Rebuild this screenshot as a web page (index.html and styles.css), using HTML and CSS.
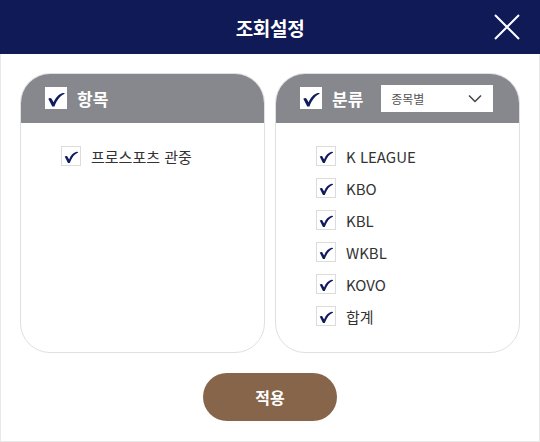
FILE: index.html
```html
<!DOCTYPE html>
<html lang="ko">
<head>
<meta charset="utf-8">
<link rel="stylesheet" href="styles.css">
</head>
<body>
<div class="modal">
  <header class="modal-head">
    <h1 class="title">조회설정</h1>
    <button class="close" aria-label="닫기">
      <svg width="26" height="26" viewBox="0 0 26 26"><path d="M1 1L25 25M25 1L1 25" stroke="#fff" stroke-width="2" fill="none"/></svg>
    </button>
  </header>
  <div class="modal-body">
    <div class="panels">
      <section class="panel">
        <div class="panel-head">
          <span class="cb cb-lg"><svg viewBox="0 0 20 20"><path d="M3 10.6 C4 9.8 5.2 9.6 5.8 10.4 L7.9 13.8 C9.6 9.4 12.6 6.2 16.2 5.4 C17.2 5.2 17.9 5.6 18 6.2 C14 7.6 11 11.6 8.6 17.8 L6.6 17.8 Z" fill="#111c5c"/></svg></span>
          <span class="panel-title">항목</span>
        </div>
        <ul class="list">
          <li><span class="cb"><svg viewBox="0 0 20 20"><path d="M3 10.6 C4 9.8 5.2 9.6 5.8 10.4 L7.9 13.8 C9.6 9.4 12.6 6.2 16.2 5.4 C17.2 5.2 17.9 5.6 18 6.2 C14 7.6 11 11.6 8.6 17.8 L6.6 17.8 Z" fill="#111c5c"/></svg></span>프로스포츠 관중</li>
        </ul>
      </section>
      <section class="panel">
        <div class="panel-head">
          <span class="cb cb-lg"><svg viewBox="0 0 20 20"><path d="M3 10.6 C4 9.8 5.2 9.6 5.8 10.4 L7.9 13.8 C9.6 9.4 12.6 6.2 16.2 5.4 C17.2 5.2 17.9 5.6 18 6.2 C14 7.6 11 11.6 8.6 17.8 L6.6 17.8 Z" fill="#111c5c"/></svg></span>
          <span class="panel-title">분류</span>
          <div class="select">
            <span>종목별</span>
            <svg width="14" height="9" viewBox="0 0 14 9"><path d="M1 1.5L7 7.5L13 1.5" stroke="#444" stroke-width="1.5" fill="none"/></svg>
          </div>
        </div>
        <ul class="list">
          <li><span class="cb"><svg viewBox="0 0 20 20"><path d="M3 10.6 C4 9.8 5.2 9.6 5.8 10.4 L7.9 13.8 C9.6 9.4 12.6 6.2 16.2 5.4 C17.2 5.2 17.9 5.6 18 6.2 C14 7.6 11 11.6 8.6 17.8 L6.6 17.8 Z" fill="#111c5c"/></svg></span>K LEAGUE</li>
          <li><span class="cb"><svg viewBox="0 0 20 20"><path d="M3 10.6 C4 9.8 5.2 9.6 5.8 10.4 L7.9 13.8 C9.6 9.4 12.6 6.2 16.2 5.4 C17.2 5.2 17.9 5.6 18 6.2 C14 7.6 11 11.6 8.6 17.8 L6.6 17.8 Z" fill="#111c5c"/></svg></span>KBO</li>
          <li><span class="cb"><svg viewBox="0 0 20 20"><path d="M3 10.6 C4 9.8 5.2 9.6 5.8 10.4 L7.9 13.8 C9.6 9.4 12.6 6.2 16.2 5.4 C17.2 5.2 17.9 5.6 18 6.2 C14 7.6 11 11.6 8.6 17.8 L6.6 17.8 Z" fill="#111c5c"/></svg></span>KBL</li>
          <li><span class="cb"><svg viewBox="0 0 20 20"><path d="M3 10.6 C4 9.8 5.2 9.6 5.8 10.4 L7.9 13.8 C9.6 9.4 12.6 6.2 16.2 5.4 C17.2 5.2 17.9 5.6 18 6.2 C14 7.6 11 11.6 8.6 17.8 L6.6 17.8 Z" fill="#111c5c"/></svg></span>WKBL</li>
          <li><span class="cb"><svg viewBox="0 0 20 20"><path d="M3 10.6 C4 9.8 5.2 9.6 5.8 10.4 L7.9 13.8 C9.6 9.4 12.6 6.2 16.2 5.4 C17.2 5.2 17.9 5.6 18 6.2 C14 7.6 11 11.6 8.6 17.8 L6.6 17.8 Z" fill="#111c5c"/></svg></span>KOVO</li>
          <li><span class="cb"><svg viewBox="0 0 20 20"><path d="M3 10.6 C4 9.8 5.2 9.6 5.8 10.4 L7.9 13.8 C9.6 9.4 12.6 6.2 16.2 5.4 C17.2 5.2 17.9 5.6 18 6.2 C14 7.6 11 11.6 8.6 17.8 L6.6 17.8 Z" fill="#111c5c"/></svg></span>합계</li>
        </ul>
      </section>
    </div>
    <div class="actions">
      <button class="apply">적용</button>
    </div>
  </div>
</div>
</body>
</html>
```
FILE: styles.css
```css
* { box-sizing: border-box; }
html, body { margin: 0; padding: 0; background: #fff; }
body {
  font-family: "Noto Sans CJK KR", "Noto Sans", sans-serif;
  color: #333;
  width: 540px;
  height: 442px;
}
.modal { width: 540px; height: 442px; display: flex; flex-direction: column; }
.modal-head {
  height: 54px;
  background: #0f1a57;
  display: flex;
  align-items: center;
  justify-content: center;
  position: relative;
}
.title {
  margin: 0;
  color: #fff;
  font-size: 19px;
  font-weight: 700;
  line-height: 1;
  letter-spacing: -0.3px;
}
.close {
  position: absolute;
  right: 20px;
  top: 14px;
  width: 26px;
  height: 26px;
  padding: 0;
  border: 0;
  background: transparent;
  display: flex;
}
.modal-body {
  flex: 1;
  border: 1px solid #e8e8e8;
  border-top: 0;
  padding: 19px 19px 0 19px;
  display: flex;
  flex-direction: column;
}
.panels { display: flex; gap: 10px; }
.panel {
  width: 246px;
  height: 280px;
  border: 1px solid #e0e0e0;
  border-radius: 30px;
  overflow: hidden;
}
.panel-head {
  height: 50px;
  background: #87888d;
  margin: -1px -1px 0 -1px;
  display: flex;
  align-items: center;
  padding-left: 25px;
}
.panel-title {
  color: #fff;
  font-size: 17px;
  font-weight: 700;
  margin-left: 10px;
  line-height: 1;
}
.cb {
  width: 20px;
  height: 20px;
  background: #fff;
  border: 1px solid #dcdcdc;
  display: inline-flex;
  flex: none;
}
.cb svg { width: 100%; height: 100%; display: block; }
.cb-lg { width: 22px; height: 22px; border: 0; }
.select {
  margin-left: 18px;
  width: 112px;
  height: 27px;
  background: #fff;
  display: flex;
  align-items: center;
  justify-content: space-between;
  padding: 0 11px 0 10px;
  font-size: 12px;
  color: #555;
}
.list {
  list-style: none;
  margin: 0;
  padding: 17px 0 0 40px;
}
.list li {
  display: flex;
  align-items: center;
  height: 32px;
  font-size: 15px;
  color: #333;
}
.list li .cb { margin-right: 10px; }
.actions { display: flex; justify-content: center; padding-top: 20px; }
.apply {
  width: 134px;
  height: 48px;
  border: 0;
  border-radius: 24px;
  background: #86654a;
  color: #fff;
  font-family: "Noto Sans CJK KR", "Noto Sans", sans-serif;
  font-size: 16px;
  font-weight: 700;
}
```
